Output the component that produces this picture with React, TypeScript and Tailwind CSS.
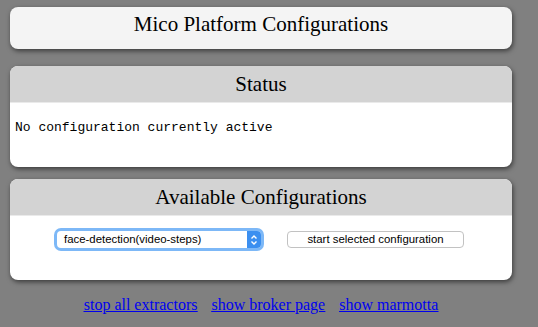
import React from "react";

const serif = "font-['Liberation_Serif','Times_New_Roman',serif]";
const sans = "font-['Liberation_Sans',Arial,sans-serif]";

const Card: React.FC<{ title: string; header?: boolean; children?: React.ReactNode; className?: string }> = ({
  title,
  header = true,
  children,
  className = "",
}) => (
  <div
    className={`ml-[10px] w-[502px] overflow-hidden rounded-[8px] shadow-[1px_2px_5px_rgba(0,0,0,0.55)] ${
      header ? "bg-white" : "bg-[#f4f4f4]"
    } ${className}`}
  >
    <div
      className={`flex items-center justify-center text-[21px] leading-none text-black ${serif} ${
        header ? "h-[37px] border-b border-[#eaeaea] bg-[#d3d3d3]" : "h-[34px] pt-[1px]"
      }`}
    >
      {title}
    </div>
    {children}
  </div>
);

export default function App() {
  return (
    <div className="h-[327px] w-[538px] bg-[#808080] pt-[7px]">
      <Card title="Mico Platform Configurations" header={false} className="h-[42px]" />

      <Card title="Status" className="mt-[17px] h-[101px]">
        <p className="pl-[5px] pt-[15px] font-['Liberation_Mono','Courier_New',monospace] text-[13px] text-black">
          No configuration currently active
        </p>
      </Card>

      <Card title="Available Configurations" className="mt-[12px] h-[101px]">
        <div className="flex items-center pl-[47px] pt-[15px]">
          <div className="flex h-[17px] w-[204px] items-center rounded-[4px] bg-white shadow-[0_0_0_3px_#7db8f7]">
            <span className={`flex-1 pl-[7px] text-[11.4px] leading-none text-black ${sans}`}>
              face-detection(video-steps)
            </span>
            <span className="flex h-full w-[14px] items-center justify-center rounded-r-[4px] bg-[#3b8ff0]">
              <svg width="8" height="12" viewBox="0 0 8 12" fill="none" stroke="white" strokeWidth="1.4">
                <path d="M1.5 4.5 L4 2 L6.5 4.5" />
                <path d="M1.5 7.5 L4 10 L6.5 7.5" />
              </svg>
            </span>
          </div>
          <button
            className={`ml-[26px] h-[17px] w-[177px] rounded-[4px] border border-[#c2c2c2] bg-white text-[11.4px] leading-none text-black ${sans}`}
          >
            start selected configuration
          </button>
        </div>
      </Card>

      <div className={`mt-[13px] flex w-[522px] justify-center gap-[14px] text-[16px] text-[#0000ee] underline ${serif}`}>
        <a href="#">stop all extractors</a>
        <a href="#">show broker page</a>
        <a href="#">show marmotta</a>
      </div>
    </div>
  );
}
